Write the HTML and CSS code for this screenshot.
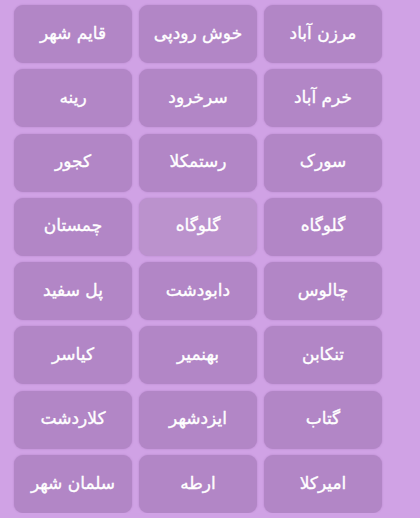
FILE: index.html
```html
<!DOCTYPE html>
<html lang="fa" dir="rtl">
<head>
    <meta name="viewport" content="width=device-width, initial-scale=1.0">
    <title>شهرها</title>
    <link rel="stylesheet" href="styles.css">
</head>
<body>
    <div class="cities">
        <button class="city">مرزن آباد</button>
        <button class="city">خوش رودپی</button>
        <button class="city">قایم شهر</button>

        <button class="city">خرم آباد</button>
        <button class="city">سرخرود</button>
        <button class="city">رینه</button>

        <button class="city">سورک</button>
        <button class="city">رستمکلا</button>
        <button class="city">کجور</button>

        <button class="city">گلوگاه</button>
        <button class="city active">گلوگاه</button>
        <button class="city">چمستان</button>

        <button class="city">چالوس</button>
        <button class="city">دابودشت</button>
        <button class="city">پل سفید</button>

        <button class="city">تنکابن</button>
        <button class="city">بهنمیر</button>
        <button class="city">کیاسر</button>

        <button class="city">گتاب</button>
        <button class="city">ایزدشهر</button>
        <button class="city">کلاردشت</button>

        <button class="city">امیرکلا</button>
        <button class="city">ارطه</button>
        <button class="city">سلمان شهر</button>
    </div>
</body>
</html>
```

FILE: styles.css
```css
body {
    margin: 0;
    background: #d0a2e5;
    font-family: "DejaVu Sans", sans-serif;
}
.cities {
    display: grid;
    grid-template-columns: repeat(3, 118px);
    grid-auto-rows: 58px;
    column-gap: 7px;
    row-gap: 6.3px;
    padding: 5px 38px 0 14px;
}
.city {
    background: #b286c6;
    color: #fff;
    border: none;
    border-radius: 9px;
    font-family: inherit;
    font-size: 17px;
    -webkit-text-stroke: 0.35px #fff;
    padding: 0 0 3px;
    box-shadow: 0 0 2px rgba(120, 70, 140, 0.35);
    cursor: pointer;
}
.city.active {
    background: #bb92cd;
}
```
